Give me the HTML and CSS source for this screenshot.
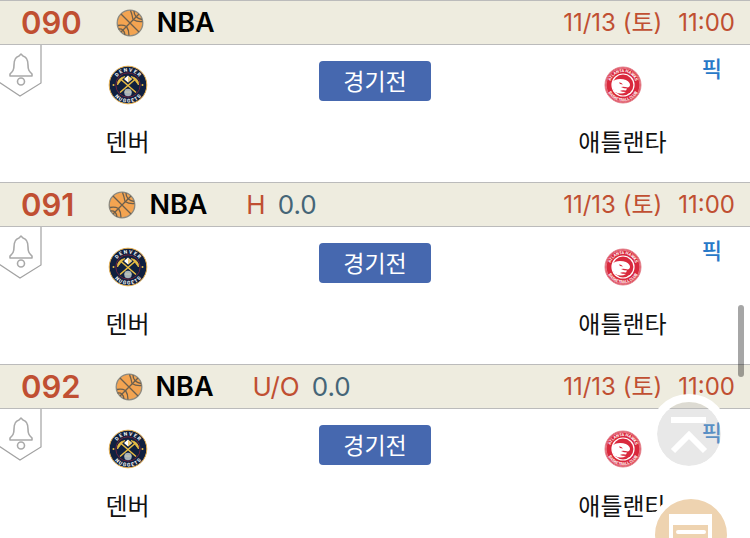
FILE: index.html
```html
<!DOCTYPE html>
<html lang="ko">
<head>
<meta charset="utf-8">
<meta name="viewport" content="width=device-width, initial-scale=1">
<title>NBA</title>
<link rel="stylesheet" href="styles.css">
</head>
<body>
<svg class="sprite" aria-hidden="true">
  <symbol id="ball" viewBox="0 0 28 28">
    <circle cx="14" cy="14" r="12.8" fill="#f3a451" stroke="#8b8980" stroke-width="1.3"/>
    <g fill="none" stroke="#6b5f4e" stroke-width="1.3">
      <path d="M5 5 23 23M5 23 23 5"/>
      <path d="M14.500 1.500Q16 5 17 10.500M18 2Q18 9 26 10.500M17 10.500Q21 13 26.500 12.500M2 16.500Q7 15.500 10.500 17.500Q13 21 13 26.500M2.500 20Q8 19 9 26"/>
    </g>
  </symbol>
  <symbol id="bell" viewBox="0 0 42 52">
    <path d="M-1 37 20 51 41 38V-1" fill="#fff" stroke="#a2a2a2" stroke-width="1.2"/>
    <g fill="none" stroke="#a9a9a9" stroke-width="1.6" stroke-linejoin="round">
      <path d="M19 11 21 9 23 11C27 12 28 16 28 20C28 25 29 26 32 29V31H10V29C13 26 14 25 14 20C14 16 15 12 19 11Z"/>
      <circle cx="21" cy="36.500" r="3.500"/>
    </g>
  </symbol>
  <symbol id="denver" viewBox="0 0 40 40">
    <circle cx="20" cy="20" r="18.800" fill="#10203f" stroke="#e8b04c" stroke-width="1"/>
    <circle cx="20" cy="20" r="12.200" fill="none" stroke="#6b2440" stroke-width="1"/>
    <path id="denver-top" d="M6.500 20A13.500 13.500 0 0 1 33.500 20" fill="none"/>
    <path id="denver-bottom" d="M2.500 20A17.500 17.500 0 0 0 37.500 20" fill="none"/>
    <g class="denver-text"><text><textPath href="#denver-top" startOffset="50%">D E N V E R</textPath></text>
    <text><textPath href="#denver-bottom" startOffset="50%">N U G G E T S</textPath></text></g>
    <path d="M12 27.500 27.500 14M28 27.500 12.500 14" stroke="#e9bd45" stroke-width="1.500"/>
    <path d="M9.500 20Q9 13 17 11.500Q12.500 15 9.500 20ZM30.500 20Q31 13 23 11.500Q27.500 15 30.500 20Z" fill="#e9bd45" stroke="#e9bd45" stroke-width=".8"/>
    <path d="M16 14 20 10.500 24 14 20 17.500Z" fill="#fff"/><path d="M20 11 24 14 20 17.500Z" fill="#f2cf79"/>
    <circle cx="20" cy="27.500" r="3.800" fill="#8fa3bd"/><path d="M16.500 27H23.500M20 24V31M18 24.500V30.500M22 24.500V30.500" stroke="#d9d3b0" stroke-width=".7"/>
    <circle cx="5.500" cy="20" r="1" fill="#e9bd45"/><circle cx="34.500" cy="20" r="1" fill="#e9bd45"/>
  </symbol>
  <symbol id="atlanta" viewBox="0 0 40 40">
    <circle cx="20" cy="20" r="18" fill="#d9293d" stroke="#e58a94" stroke-width="1"/>
    <circle cx="20" cy="20" r="16.800" fill="none" stroke="#f1aeb5" stroke-width=".6"/>
    <path id="atlanta-top" d="M7 20A13 13 0 0 1 33 20" fill="none"/>
    <path id="atlanta-bottom" d="M3.800 20A16.200 16.200 0 0 0 36.200 20" fill="none"/>
    <g class="atlanta-text"><text><textPath href="#atlanta-top" startOffset="50%">ATLANTA HAWKS</textPath></text>
    <text><textPath href="#atlanta-bottom" startOffset="50%">BASKETBALL CLUB</textPath></text></g>
    <circle cx="20" cy="20" r="11.600" fill="#fff"/>
    <circle cx="20" cy="20" r="10.400" fill="#d9293d"/>
    <path d="M9 17Q12 14 17 14Q24 14 26.500 18Q28 21 25 22.500Q21 21.500 18 22Q21 23.500 24 23.500L23 25.500Q18 25 17 26Q19 27 23 27Q18 30 12 27Q8.500 23 9 17Z" fill="#fff"/>
    <path d="M16 17.500Q18 17 20 19.500L17 19Z" fill="#d9293d"/>
  </symbol>
</svg>

<main class="games">
  <article class="game">
    <header class="bar">
      <span class="number">090</span>
      <svg class="ball" aria-hidden="true"><use href="#ball"/></svg>
      <span class="league">NBA</span>
      <time class="when"><span>11/13 (토)</span><span>11:00</span></time>
    </header>
    <div class="match">
      <button class="alarm" type="button" aria-label="알림"><svg><use href="#bell"/></svg></button>
      <div class="team"><svg class="logo"><use href="#denver"/></svg><span>덴버</span></div>
      <button class="state" type="button">경기전</button>
      <div class="team"><svg class="logo"><use href="#atlanta"/></svg><span>애틀랜타</span></div>
      <a class="pick" href="#">픽</a>
    </div>
  </article>
  <article class="game">
    <header class="bar">
      <span class="number">091</span>
      <svg class="ball" aria-hidden="true"><use href="#ball"/></svg>
      <span class="league">NBA</span>
      <span class="line"><span class="kind">H</span><span>0.0</span></span>
      <time class="when"><span>11/13 (토)</span><span>11:00</span></time>
    </header>
    <div class="match">
      <button class="alarm" type="button" aria-label="알림"><svg><use href="#bell"/></svg></button>
      <div class="team"><svg class="logo"><use href="#denver"/></svg><span>덴버</span></div>
      <button class="state" type="button">경기전</button>
      <div class="team"><svg class="logo"><use href="#atlanta"/></svg><span>애틀랜타</span></div>
      <a class="pick" href="#">픽</a>
    </div>
  </article>
  <article class="game">
    <header class="bar">
      <span class="number">092</span>
      <svg class="ball" aria-hidden="true"><use href="#ball"/></svg>
      <span class="league">NBA</span>
      <span class="line"><span class="kind">U/O</span><span>0.0</span></span>
      <time class="when"><span>11/13 (토)</span><span>11:00</span></time>
    </header>
    <div class="match">
      <button class="alarm" type="button" aria-label="알림"><svg><use href="#bell"/></svg></button>
      <div class="team"><svg class="logo"><use href="#denver"/></svg><span>덴버</span></div>
      <button class="state" type="button">경기전</button>
      <div class="team"><svg class="logo"><use href="#atlanta"/></svg><span>애틀랜타</span></div>
      <a class="pick" href="#">픽</a>
    </div>
  </article>
</main>

<button class="float to-top" type="button" aria-label="맨 위로">
  <svg viewBox="0 0 80 80"><path d="M22 26H57" stroke="#fff" stroke-width="6" fill="none"/><path d="M24 57 40 41 56 57" fill="none" stroke="#fff" stroke-width="6"/></svg>
</button>
<button class="float note" type="button" aria-label="목록">
  <svg viewBox="0 0 80 80"><path d="M18 19H61V66H18Z" fill="#fff"/><path d="M22 30H57V62H22Z" fill="#eed3b0"/><path d="M27 37H53M27 47H53" stroke="#fff" stroke-width="4" stroke-linecap="round"/></svg>
</button>
<div class="scroll-thumb"></div>
</body>
</html>
```

FILE: styles.css
```css
* { box-sizing: border-box; }

html { height: 100%; overflow: hidden; }

body {
  height: 100%;
  margin: 0;
  overflow: hidden;
  background: #fff;
  color: #111;
  font-family: Inter, "Noto Sans CJK KR", sans-serif;
}

button {
  padding: 0;
  border: 0;
  background: none;
  font: inherit;
}

.sprite { display: none; }

.bar {
  display: flex;
  align-items: center;
  height: 45px;
  padding: 0 15px 0 21px;
  border-top: 1px solid #bbb;
  border-bottom: 1px solid #bbb;
  background: #eeecdf;
  line-height: 36px;
  white-space: nowrap;
}

.number {
  color: #c04f32;
  font-size: 31px;
  font-weight: 600;
}

.ball { width: 28px; height: 28px; margin: 0 13px 0 34px; }

.league { color: #000; font-size: 27px; font-weight: 600; }

.line {
  display: flex;
  gap: 12px;
  margin-left: 39px;
  color: #456577;
  font-size: 26px;
  font-weight: 400;
}

.kind { color: #c04f32; }

.when {
  display: flex;
  align-items: baseline;
  gap: 16px;
  margin-left: auto;
  color: #c04f32;
  font-size: 24px;
  font-weight: 400;
}

.match {
  position: relative;
  display: grid;
  grid-template-columns: 34% 1fr 34%;
  height: 137px;
  padding-top: 16px;
}

.alarm { position: absolute; top: 0; left: 0; }

.alarm svg { display: block; width: 42px; height: 52px; }

.team {
  display: flex;
  flex-direction: column;
  align-items: center;
  gap: 20px;
  padding-top: 4px;
  font-size: 24px;
  line-height: 36px;
}

.logo { width: 40px; height: 40px; }

.denver-text, .atlanta-text {
  fill: #fff;
  font-family: Roboto, sans-serif;
  font-weight: 700;
  text-anchor: middle;
}

.denver-text { font-size: 5px; }

.atlanta-text { font-size: 4px; }

.state {
  justify-self: center;
  width: 112px;
  height: 40px;
  padding-bottom: 3px;
  border-radius: 4px;
  background: #4668af;
  color: #fff;
  font-size: 23px;
}

.pick {
  position: absolute;
  top: 6px;
  right: 28px;
  color: #2879c8;
  font-size: 22px;
  font-weight: 500;
  line-height: 36px;
  text-decoration: none;
}

.float { position: fixed; border-radius: 50%; }

.float svg { display: block; }

.to-top {
  right: 21px;
  bottom: 64px;
  width: 80px;
  height: 80px;
  border: 8px solid #fff;
  background: rgb(188 188 188 / 34%);
  background-clip: padding-box;
}

.to-top svg { width: 80px; height: 80px; margin: -8px; }

.note {
  right: 17px;
  bottom: -39px;
  width: 84px;
  height: 84px;
  border: 6px solid #fff;
  background: #eed3b0;
}

.note svg { width: 80px; height: 80px; margin: -4px; }

.scroll-thumb {
  position: fixed;
  top: 305px;
  right: 6px;
  width: 6px;
  height: 72px;
  border-radius: 3px;
  background: rgb(0 0 0 / 35%);
}
```
